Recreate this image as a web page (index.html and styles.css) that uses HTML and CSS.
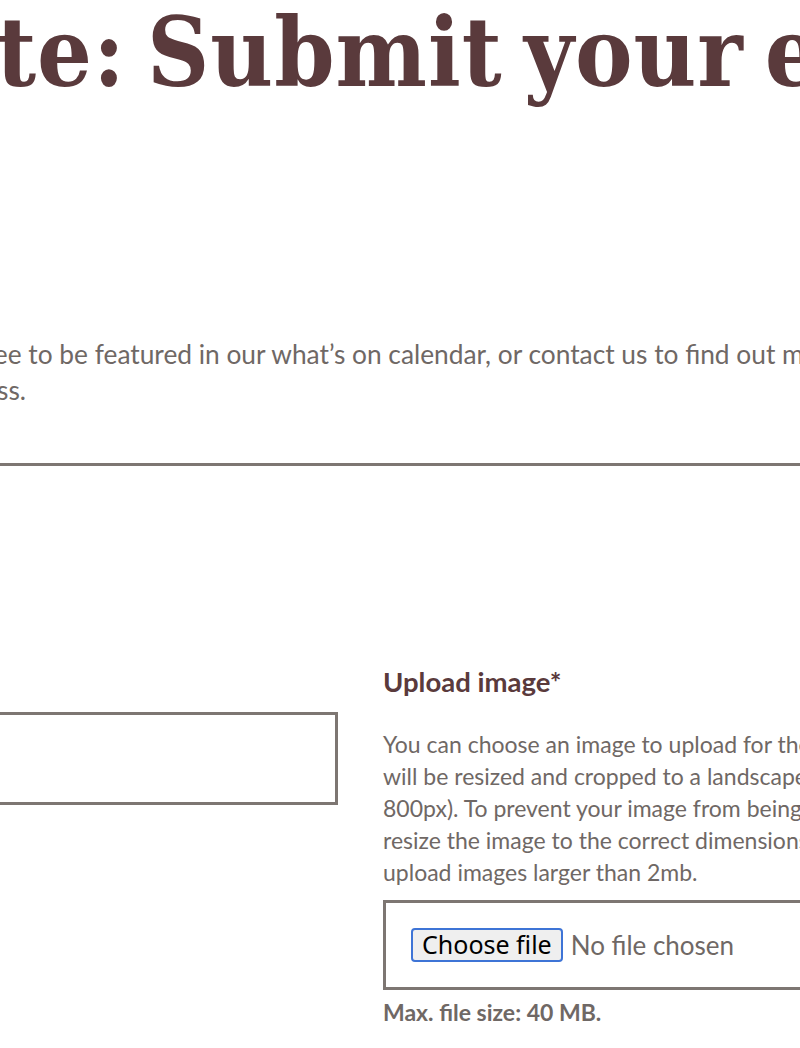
FILE: index.html
```html
<!DOCTYPE html>
<html lang="en">
<head>
    <meta charset="UTF-8">
    <meta name="viewport" content="width=device-width, initial-scale=1.0">
    <title>Create: Submit your event</title>
    <link rel="stylesheet" href="styles.css">
</head>
<body>
    <div class="page">
        <header class="intro">
            <h1 class="title">Create: Submit your event</h1>
            <p class="lead">List an event for free to be featured in our what&rsquo;s on calendar, or contact us to find out more about the<br>submission process.</p>
        </header>

        <hr class="divider">

        <form class="event-form" id="eventForm">
            <div class="field">
                <label for="name" class="field-label">Name*</label>
                <input type="text" id="name" name="name" class="text-input" required>
            </div>

            <div class="field">
                <label for="image" class="field-label">Upload image*</label>
                <p class="field-help">You can choose an image to upload for the event. It<br>will be resized and cropped to a landscape (1200 x<br>800px). To prevent your image from being cropped,<br>resize the image to the correct dimensions. Do not<br>upload images larger than 2mb.</p>
                <div class="file-box">
                    <button type="button" class="file-btn">Choose file</button>
                    <span class="file-name">No file chosen</span>
                </div>
                <p class="file-note">Max. file size: 40 MB.</p>
            </div>
        </form>
    </div>
</body>
</html>
```

FILE: styles.css
```css
body {
    margin: 0;
    background: #fff;
    font-family: Lato, "Noto Sans", sans-serif;
    color: #6f6865;
    overflow: hidden;
}
.page {
    width: 1141px;
    margin-left: -210px;
}
.title {
    font-family: "DejaVu Serif", Georgia, serif;
    font-stretch: condensed;
    font-weight: bold;
    font-size: 96px;
    line-height: 1.1;
    letter-spacing: 1px;
    word-spacing: -10px;
    text-indent: -23px;
    color: #5a3a3c;
    margin: 0;
    white-space: nowrap;
}
.lead {
    font-size: 26.3px;
    line-height: 36px;
    padding-left: 8px;
    text-indent: -15px;
    margin: 230px 0 0;
    white-space: nowrap;
}
.divider {
    border: none;
    border-top: 3px solid #7d7672;
    margin: 55px -400px 0;
}
.event-form {
    display: grid;
    grid-template-columns: 1fr 1fr;
    column-gap: 45px;
    margin-top: 200px;
}
.field-label {
    display: block;
    font-weight: bold;
    font-size: 27.5px;
    line-height: 32px;
    color: #5a3a3c;
    margin-bottom: 14px;
}
.text-input {
    display: block;
    width: 100%;
    box-sizing: border-box;
    height: 93px;
    border: 3px solid #7d7672;
    border-radius: 0;
    background: #fff;
}
.field-help {
    font-size: 23px;
    line-height: 32px;
    margin: 30px 0 12px;
}
.file-box {
    border: 3px solid #7d7672;
    height: 90px;
    box-sizing: border-box;
    display: flex;
    align-items: center;
    gap: 8px;
    padding: 0 25px;
}
.file-btn {
    font-family: "Noto Sans", sans-serif;
    font-size: 25px;
    line-height: 1;
    color: #000;
    background: #efefef;
    border: 2px solid #3e74d6;
    border-radius: 4px;
    padding: 0 9px;
    height: 34px;
}
.file-name {
    font-size: 26px;
}
.file-note {
    font-weight: bold;
    font-size: 23px;
    line-height: 28px;
    margin: 8px 0 0;
}
```
